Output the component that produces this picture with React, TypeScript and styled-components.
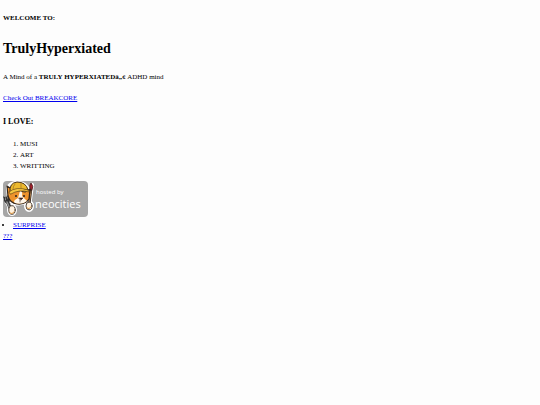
import React from "react";
import styled, { createGlobalStyle } from "styled-components";

const GlobalStyle = createGlobalStyle`
  body {
    margin: 0;
    background: #fdfdfd;
    color: #000;
    font-family: "Liberation Serif", "Times New Roman", serif;
    font-size: 7px;
    line-height: 11px;
  }
`;

const Page = styled.main`
  padding: 13px 3px;
`;

const Welcome = styled.h4`
  margin: 0 0 14px;
  font-size: 7px;
  line-height: 11px;
`;

const Title = styled.h1`
  margin: 0 0 12px;
  font-size: 14px;
  line-height: 22px;
`;

const Paragraph = styled.p`
  margin: 0 0 10px;
`;

const Link = styled.a`
  color: #0000ee;
  text-decoration: underline;
`;

const Subtitle = styled.h3`
  margin: 11px 0 10px;
  font-size: 8px;
  line-height: 14px;
`;

const Loves = styled.ol`
  margin: 0 0 9px;
  padding-left: 17px;
`;

const BadgeLink = styled.a`
  display: block;
  width: 85px;
  height: 36px;
  margin-bottom: 3px;
`;

const Links = styled.ul`
  margin: 0;
  padding-left: 10px;
`;

const BadgeName = styled.text`
  font-family: "Open Sans", sans-serif;
  fill: #fff;
`;

const HostBadge = () => (
  <svg width="85" height="36" viewBox="0 0 85 36" role="img" aria-label="Hosted by Neocities">
    <rect width="85" height="36" rx="4" fill="#a6a6a6" />
    <g strokeLinecap="round" strokeLinejoin="round">
      <g fill="none" stroke="#fff" strokeWidth="4">
        <path d="M2 17 L9 31 M29 4 L26 26" />
        <path d="M5 7 C8 0 21 0 25 8 L26 17 C22 24 9 25 6 17Z" />
        <ellipse cx="9" cy="29" rx="3" ry="4" />
        <ellipse cx="26" cy="25" rx="3" ry="4" />
      </g>
      <path d="M4 20 L9 31" stroke="#333" strokeWidth="3.2" />
      <path d="M1 16 L2 20 Q4 23 6 20 L5 15 M3 16 L4 19" fill="none" stroke="#333" strokeWidth="1.7" />
      <path d="M4 21 L8 30" stroke="#929292" strokeWidth="1.4" />
      <path d="M28 9 L26 25" stroke="#30251e" strokeWidth="2.4" />
      <path d="M28 10 L26 24" stroke="#a77a4a" strokeWidth="1" />
      <path d="M27 8 Q26 4 28 2 Q31 5 29 9Z" fill="#a91f2d" stroke="#421e20" strokeWidth=".8" />
      <path d="M4 5 L10 9 L22 11 L27 8 L26 18 Q22 24 14 23 Q7 22 5 15Z" fill="#ed932c" stroke="#33251a" strokeWidth="1.2" />
      <path d="M17 10 Q20 10 19 15 L24 20 Q19 24 12 22 Q9 20 15 17Z" fill="#fff6e8" />
      <path d="M7 11 Q6 2 14 1 Q23 1 25 9 Q16 7 8 12Z" fill="#edba2e" stroke="#44301a" strokeWidth="1" />
      <path d="M6 11 Q13 5 25 9 L26 11 Q16 8 8 13Z" fill="#f4c742" stroke="#6c4a19" strokeWidth=".7" />
      <path d="M12 3 Q10 5 10 8 M18 2 L18 7" fill="none" stroke="#9b7125" strokeWidth=".7" />
      <circle cx="13" cy="15" r="1" fill="#281f1b" />
      <circle cx="21" cy="15" r="1" fill="#281f1b" />
      <path d="M16 17 L20 17 L18 19Z M17 19 L17 21" fill="#3a211b" stroke="#3a211b" strokeWidth=".6" />
      <ellipse cx="9" cy="29" rx="3.2" ry="4.3" fill="#fff2df" stroke="#3d3026" strokeWidth=".9" />
      <ellipse cx="26" cy="25" rx="3" ry="3.9" fill="#fff2df" stroke="#3d3026" strokeWidth=".9" />
      <path d="M7 32 Q9 34 11 31 M24 27 Q26 29 28 26" fill="none" stroke="#e49b43" />
    </g>
    <BadgeName x="33" y="13" fontSize="6">hosted by</BadgeName>
    <BadgeName x="32" y="27" fontSize="11">neocities</BadgeName>
  </svg>
);

export default function App() {
  return (
    <>
      <GlobalStyle />
      <Page>
        <Welcome>WELCOME TO:</Welcome>
        <Title>TrulyHyperxiated</Title>
        <Paragraph>
          A Mind of a <strong>TRULY HYPERXIATEDâ„¢</strong> ADHD mind
        </Paragraph>
        <Paragraph>
          <Link href="#breakcore">Check Out BREAKCORE</Link>
        </Paragraph>
        <Subtitle>I LOVE:</Subtitle>
        <Loves>
          <li>MUSI</li>
          <li>ART</li>
          <li>WRITTING</li>
        </Loves>
        <BadgeLink href="#neocities">
          <HostBadge />
        </BadgeLink>
        <Links>
          <li>
            <Link href="#surprise">SURPRISE</Link>
          </li>
        </Links>
        <Link href="#mystery">???</Link>
      </Page>
    </>
  );
}
